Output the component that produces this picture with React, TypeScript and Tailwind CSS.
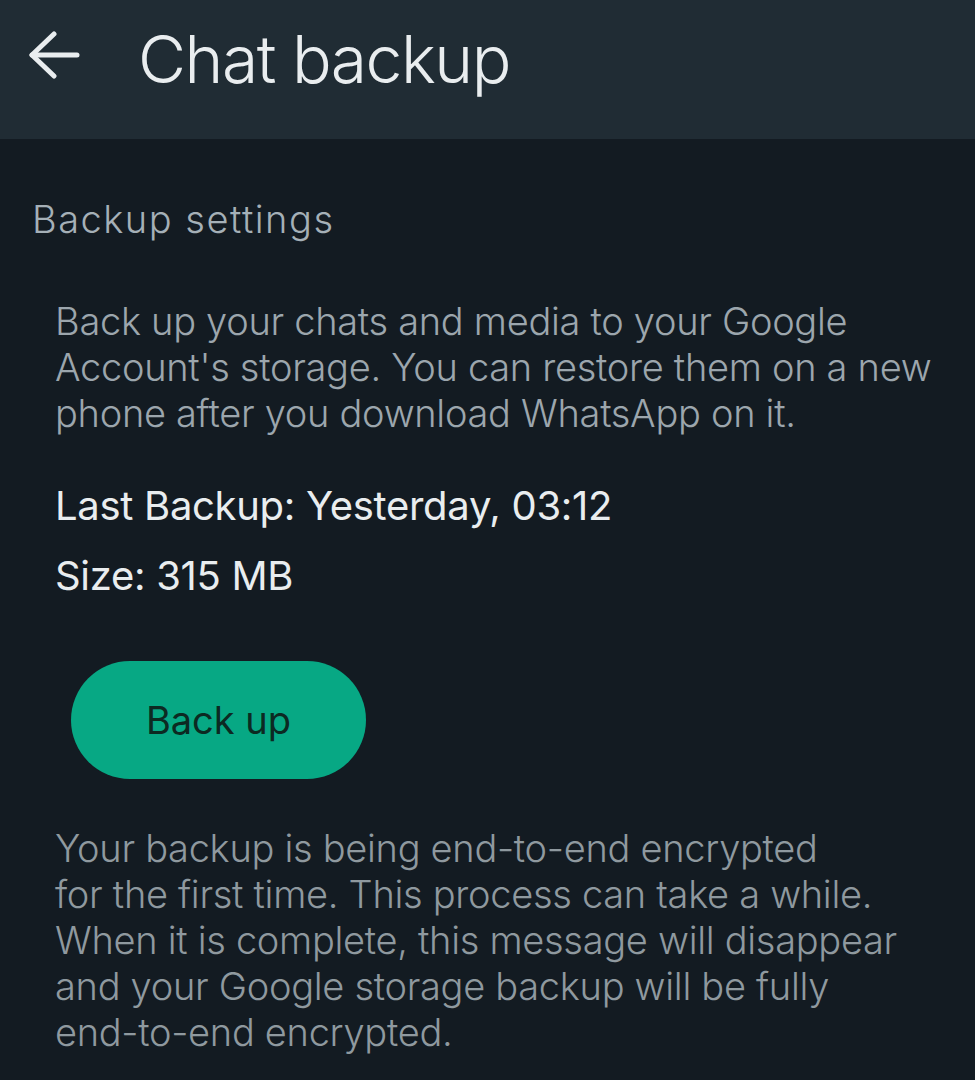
import React from "react";

const font = { fontFamily: "Inter, 'Noto Sans', sans-serif" };

function BackArrow() {
  return (
    <svg width="52" height="48" viewBox="0 0 52 48" fill="none" stroke="#e9edef" strokeWidth="5" strokeLinecap="round" strokeLinejoin="round">
      <path d="M49 24H4" />
      <path d="M26 3L4 24l22 21" />
    </svg>
  );
}

export default function App() {
  return (
    <div className="w-[975px] h-[1080px] bg-[#131b22] overflow-hidden" style={font}>
      <header className="h-[139px] bg-[#202c34] flex items-start">
        <div className="pl-[28px] pt-[31px] w-[138px]">
          <BackArrow />
        </div>
        <h1 className="pt-[26px] text-[66px] font-light text-[#e9edef] leading-[66px] tracking-[-1.5px]">Chat backup</h1>
      </header>

      <main className="pt-[57px]">
        <h2 className="pl-[32px] text-[38px] font-light text-[#a5b0b7] leading-[46px] tracking-[1.5px]">Backup settings</h2>

        <p className="pl-[55px] mt-[56px] text-[38px] font-light text-[#9ca6ad] leading-[46px] tracking-[-0.3px]">
          Back up your chats and media to your Google
          <br />
          Account's storage. You can restore them on a new
          <br />
          phone after you download WhatsApp on it.
        </p>

        <div className="pl-[55px] mt-[35px] text-[40px] font-normal text-[#e9edef] leading-[70px] tracking-[-0.3px]">
          <div>Last Backup: Yesterday, 03:12</div>
          <div>Size: 315 MB</div>
        </div>

        <div className="pl-[71px] mt-[50px]">
          <button className="w-[295px] h-[118px] rounded-full bg-[#07a884] text-[#0c2a22] text-[38px] font-normal">
            Back up
          </button>
        </div>

        <p className="pl-[55px] mt-[46px] text-[38px] font-light text-[#8f999f] leading-[46px] tracking-[-0.3px]">
          Your backup is being end-to-end encrypted
          <br />
          for the first time. This process can take a while.
          <br />
          When it is complete, this message will disappear
          <br />
          and your Google storage backup will be fully
          <br />
          end-to-end encrypted.
        </p>
      </main>
    </div>
  );
}
